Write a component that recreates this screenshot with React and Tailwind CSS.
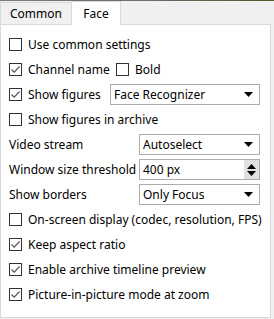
import React from "react";

const font = { fontFamily: '"Noto Sans", sans-serif' };

const Check = ({ checked }) => (
  <span className="w-[13px] h-[13px] border border-[#333333] bg-white flex items-center justify-center shrink-0">
    {checked && (
      <svg width="11" height="11" viewBox="0 0 11 11">
        <path d="M1.5 5.5 L4.2 8.2 L9.5 2.5" fill="none" stroke="#555" strokeWidth="1.2" />
      </svg>
    )}
  </span>
);

const CheckRow = ({ checked, label }) => (
  <div className="h-[25px] flex items-center gap-[6px]">
    <Check checked={checked} />
    <span>{label}</span>
  </div>
);

const Arrow = () => (
  <svg width="9" height="5" viewBox="0 0 9 5">
    <path d="M0 0 H9 L4.5 5 Z" fill="#000" />
  </svg>
);

const Select = ({ value, className }) => (
  <div className={"h-[21px] border border-[#adadad] bg-white flex items-center pl-[3px] pr-[6px] " + className}>
    <span className="flex-1">{value}</span>
    <Arrow />
  </div>
);

const LabelRow = ({ label, children }) => (
  <div className="h-[25px] flex items-center">
    <span className="w-[130px]">{label}</span>
    {children}
  </div>
);

export default function App() {
  return (
    <div className="w-[274px] h-[319px] bg-[#f0f0f0] flex flex-col text-[12px] text-black" style={font}>
      <div className="h-px bg-gradient-to-r from-[#7a7a7a] via-[#6e6e6e] to-[#4e5a22]" />
      <div className="h-[23px] flex items-end relative z-10">
        <div className="w-[72px] h-[22px] border border-[#d9d9d9] border-b-0 bg-[#f0f0f0] flex items-center justify-center">
          Common
        </div>
        <div className="w-[49px] h-[24px] border border-[#d9d9d9] border-b-0 border-l-0 bg-white flex items-center justify-center -mb-px">
          Face
        </div>
      </div>
      <div className="w-[271px] h-[294px] border border-[#d9d9d9] bg-white pl-[8px] pt-[7px] flex flex-col">
        <CheckRow label="Use common settings" />
        <div className="h-[25px] flex items-center">
          <div className="w-[107px] flex items-center gap-[6px]">
            <Check checked />
            <span>Channel name</span>
          </div>
          <div className="flex items-center gap-[6px]">
            <Check />
            <span>Bold</span>
          </div>
        </div>
        <div className="h-[25px] flex items-center">
          <div className="w-[101px] flex items-center gap-[6px]">
            <Check checked />
            <span>Show figures</span>
          </div>
          <Select value="Face Recognizer" className="w-[150px]" />
        </div>
        <CheckRow label="Show figures in archive" />
        <LabelRow label="Video stream">
          <Select value="Autoselect" className="w-[121px]" />
        </LabelRow>
        <LabelRow label="Window size threshold">
          <div className="w-[121px] h-[21px] border border-[#adadad] bg-white flex items-center">
            <span className="flex-1 pl-[3px]">400 px</span>
            <div className="w-[15px] h-[19px] bg-[#e0e0e0] flex flex-col items-center justify-center gap-[2px]">
              <svg width="9" height="5" viewBox="0 0 9 5">
                <path d="M0 5 H9 L4.5 0 Z" fill="#000" />
              </svg>
              <svg width="9" height="5" viewBox="0 0 9 5">
                <path d="M0 0 H9 L4.5 5 Z" fill="#000" />
              </svg>
            </div>
          </div>
        </LabelRow>
        <LabelRow label="Show borders">
          <Select value="Only Focus" className="w-[121px]" />
        </LabelRow>
        <CheckRow label="On-screen display (codec, resolution, FPS)" />
        <CheckRow checked label="Keep aspect ratio" />
        <CheckRow checked label="Enable archive timeline preview" />
        <CheckRow checked label="Picture-in-picture mode at zoom" />
      </div>
    </div>
  );
}
